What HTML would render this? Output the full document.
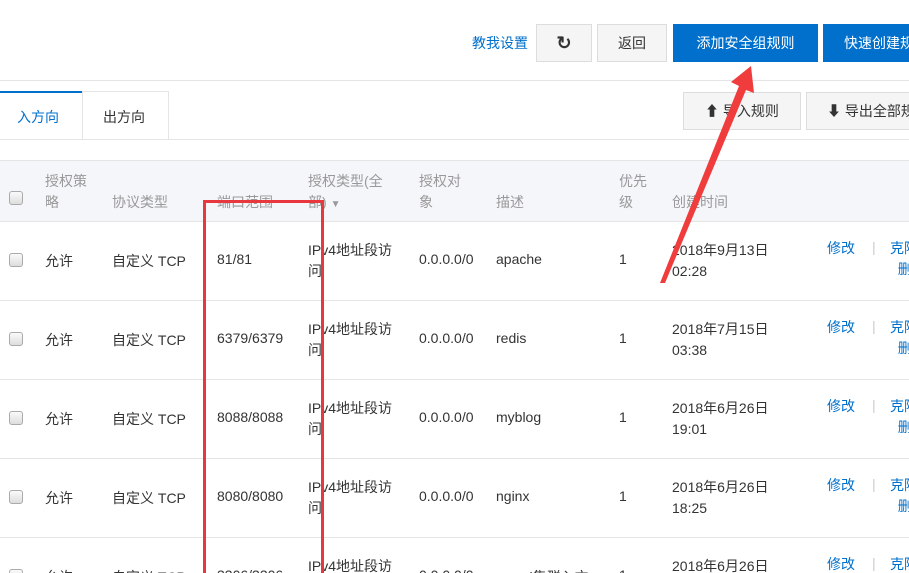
<!DOCTYPE html>
<html><head><meta charset="utf-8"><style>
html,body{margin:0;width:909px;height:573px;overflow:hidden}
body{background:#fff;position:relative;font-family:"Liberation Sans","Noto Sans CJK SC",sans-serif;font-size:14px;color:#333}
.a{position:absolute;white-space:nowrap}
.btn{position:absolute;box-sizing:border-box;border:1px solid #ddd;background:#f5f5f5;text-align:center;color:#333;white-space:nowrap;overflow:hidden}
.blue{position:absolute;background:#0070cc;color:#fff;text-align:center;white-space:nowrap;overflow:hidden}
.hl{position:absolute;left:0;width:909px;height:1px;background:#e5e5e5}
.cb{position:absolute;left:9px;width:12px;height:12px;border:1px solid #aaa;border-radius:3px;background:linear-gradient(#fafafa,#ddd)}
.h{color:#999;line-height:21px}
.lk{color:#0070cc}
</style></head><body>
<div class="a lk" style="left:472px;top:33px">教我设置</div>
<div class="btn" style="left:536px;top:24px;width:56px;height:38px;line-height:36px;font-size:18px;font-weight:bold">&#x21bb;</div>
<div class="btn" style="left:597px;top:24px;width:70px;height:38px;line-height:36px">返回</div>
<div class="blue" style="left:673px;top:24px;width:145px;height:38px;line-height:38px">添加安全组规则</div>
<div class="blue" style="left:823px;top:24px;width:100px;height:38px;line-height:38px;text-align:left;padding-left:21px">快速创建规则</div>
<div class="hl" style="top:80px"></div>
<div class="a" style="left:0;top:91px;width:82px;height:2px;background:#0070cc"></div>
<div class="a" style="left:82px;top:91px;width:85px;height:48px;border:1px solid #e5e5e5;border-bottom:none"></div>
<div class="a lk" style="left:17px;top:107px">入方向</div>
<div class="a" style="left:103px;top:107px">出方向</div>
<div class="hl" style="top:139px"></div>
<div class="btn" style="left:683px;top:92px;width:118px;height:38px;line-height:36px">&#x2B06; 导入规则</div>
<div class="btn" style="left:806px;top:92px;width:120px;height:38px;line-height:36px;text-align:left;padding-left:20px">&#x2B07; 导出全部规则</div>
<div class="a" style="left:0;top:160px;width:909px;height:61px;background:#f5f6fa;border-top:1px solid #e5e5e5"></div>
<div class="cb" style="top:191px"></div>
<div class="a h" style="left:45px;top:171px">授权策<br>略</div>
<div class="a h" style="left:112px;top:192px">协议类型</div>
<div class="a h" style="left:217px;top:192px">端口范围</div>
<div class="a h" style="left:308px;top:171px">授权类型(全<br>部) <span style="font-size:10px">&#x25BC;</span></div>
<div class="a h" style="left:419px;top:171px">授权对<br>象</div>
<div class="a h" style="left:496px;top:192px">描述</div>
<div class="a h" style="left:619px;top:171px">优先<br>级</div>
<div class="a h" style="left:672px;top:192px">创建时间</div>

<div id="rows"></div>
<script>
var d=[["81/81","apache","2018年9月13日","02:28"],["6379/6379","redis","2018年7月15日","03:38"],["8088/8088","myblog","2018年6月26日","19:01"],["8080/8080","nginx","2018年6月26日","18:25"],["3306/3306","mysql集群入方","2018年6月26日","18:25"]];
var h="";
d.forEach(function(r,i){var t=221+79*i,c=t+39;
h+='<div class="hl" style="top:'+t+'px"></div>';
h+='<div class="cb" style="top:'+(c-7)+'px"></div>';
h+='<div class="a" style="left:45px;top:'+(c-9)+'px">允许</div>';
h+='<div class="a" style="left:112px;top:'+(c-9)+'px">自定义 TCP</div>';
h+='<div class="a" style="left:217px;top:'+(c-9)+'px">'+r[0]+'</div>';
h+='<div class="a" style="left:308px;top:'+(c-20)+'px;line-height:21px">IPv4地址段访<br>问</div>';
h+='<div class="a" style="left:419px;top:'+(c-9)+'px">0.0.0.0/0</div>';
h+='<div class="a" style="left:496px;top:'+(c-9)+'px">'+r[1]+'</div>';
h+='<div class="a" style="left:619px;top:'+(c-9)+'px">1</div>';
h+='<div class="a" style="left:672px;top:'+(c-20)+'px;line-height:21px">'+r[2]+'<br>'+r[3]+'</div>';
h+='<div class="a lk" style="left:827px;top:'+(c-22)+'px">修改</div>';
h+='<div class="a" style="left:872px;top:'+(c-21)+'px;color:#ccc">|</div>';
h+='<div class="a lk" style="left:890px;top:'+(c-22)+'px;line-height:21px">克隆<br>&nbsp;&nbsp;删</div>';
});
document.getElementById("rows").innerHTML=h;
</script>
<div class="a" style="left:203px;top:200px;width:121px;height:380px;border:3px solid #e8383d;border-bottom:none;box-sizing:border-box"></div>
<svg class="a" style="left:0;top:0" width="909" height="573"><polygon points="751,66 731,82 739,86 660,283 665,283 746,90 754,93" fill="#f03c3c"/></svg>
</body></html>
